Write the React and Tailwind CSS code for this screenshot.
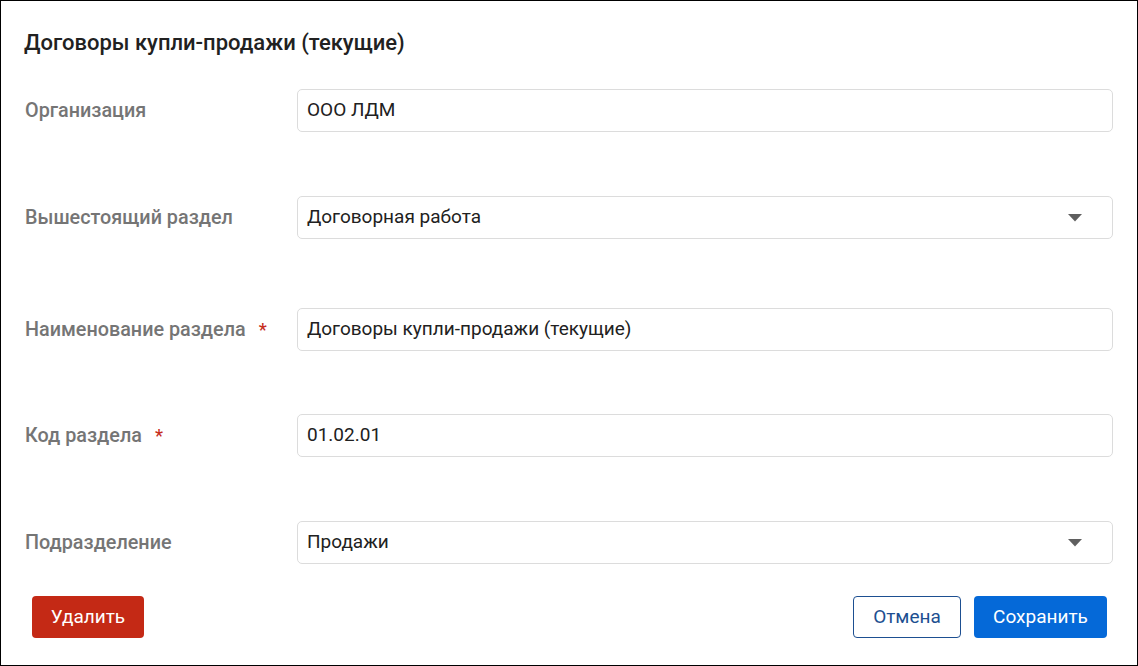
import React from "react";

const font = { fontFamily: "Roboto, 'Noto Sans', sans-serif" };

function Caret() {
  return (
    <svg width="14" height="8" viewBox="0 0 14 8" className="shrink-0">
      <path d="M0 0 L14 0 L7 7.5 Z" fill="#5f5f5f" />
    </svg>
  );
}

function Field({ label, value, required, select, className = "" }) {
  return (
    <div className={`flex items-center ${className}`}>
      <div className="w-[273px] flex items-center text-[19.8px] font-medium text-[#757575] leading-[24px] pl-[1px]">
        <span>{label}</span>
        {required && <span className="ml-[13px] text-[#c62e1e] text-[18px]">*</span>}
      </div>
      <div className="w-[816px] h-[43px] border border-[#dcdcdc] rounded-[5px] flex items-center pl-[9px] pr-[30px] text-[19px] text-[#212121] bg-white">
        <span className="flex-1">{value}</span>
        {select && <Caret />}
      </div>
    </div>
  );
}

export default function App() {
  return (
    <div style={font} className="w-[1138px] h-[666px] bg-white border border-black flex flex-col pl-[23px] pr-[24px] overflow-hidden">
      <h1 className="mt-[30px] text-[22px] font-medium text-[#212121] leading-[24px]">
        Договоры купли-продажи (текущие)
      </h1>
      <Field className="mt-[34px]" label="Организация" value="ООО ЛДМ" />
      <Field className="mt-[64px]" label="Вышестоящий раздел" value="Договорная работа" select />
      <Field className="mt-[69px]" label="Наименование раздела" value="Договоры купли-продажи (текущие)" required />
      <Field className="mt-[63px]" label="Код раздела" value="01.02.01" required />
      <Field className="mt-[64px]" label="Подразделение" value="Продажи" select />
      <div className="mt-[32px] flex items-center pl-[8px] pr-[6px]">
        <button className="h-[42px] w-[112px] rounded-[4px] bg-[#c42915] text-white text-[19px]">
          Удалить
        </button>
        <div className="flex-1" />
        <button className="h-[42px] w-[108px] rounded-[4px] border border-[#1d4f91] text-[#1d4f91] text-[19px] bg-white">
          Отмена
        </button>
        <button className="ml-[13px] h-[42px] w-[133px] rounded-[4px] bg-[#0569d8] text-white text-[19px]">
          Сохранить
        </button>
      </div>
    </div>
  );
}
